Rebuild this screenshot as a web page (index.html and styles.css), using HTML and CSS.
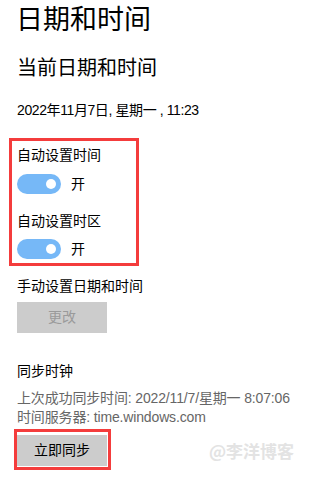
FILE: index.html
```html
<!DOCTYPE html>
<html lang="zh-CN">
<head>
<meta charset="utf-8">
<title>日期和时间</title>
<link rel="stylesheet" href="styles.css">
</head>
<body>
<div class="page">
  <h1 class="title">日期和时间</h1>
  <h2 class="subtitle">当前日期和时间</h2>
  <div class="now">2022年11月7日, 星期一 , 11:23</div>

  <div class="mark auto-box">
    <div class="label">自动设置时间</div>
    <div class="toggle-row">
      <span class="toggle"><span class="knob"></span></span>
      <span class="state">开</span>
    </div>
    <div class="label label-2">自动设置时区</div>
    <div class="toggle-row">
      <span class="toggle"><span class="knob"></span></span>
      <span class="state">开</span>
    </div>
  </div>

  <div class="label manual">手动设置日期和时间</div>
  <div class="btn btn-disabled">更改</div>

  <div class="label sync-title">同步时钟</div>
  <div class="info">
    <div>上次成功同步时间: 2022/11/7/星期一 8:07:06</div>
    <div>时间服务器: time.windows.com</div>
  </div>
  <div class="mark sync-box">
    <div class="btn">立即同步</div>
  </div>
</div>
<div class="watermark">@李洋博客</div>
</body>
</html>
```

FILE: styles.css
```css
html, body {
  margin: 0;
  padding: 0;
  background: #ffffff;
}
body {
  width: 313px;
  height: 478px;
  overflow: hidden;
  position: relative;
  font-family: "Liberation Sans", "Noto Sans CJK SC", sans-serif;
  color: #000;
}
.page {
  padding: 2px 0 0 17px;
  display: flex;
  flex-direction: column;
  align-items: flex-start;
}
.title {
  margin: 0 0 0 -1px;
  font-size: 27px;
  font-weight: 400;
  line-height: 36px;
}
.subtitle {
  margin: 16px 0 0 0;
  font-size: 20px;
  font-weight: 400;
  line-height: 28px;
}
.now {
  margin-top: 18px;
  font-size: 14px;
  line-height: 20px;
  letter-spacing: -0.4px;
}
.mark {
  border: 3px solid #f43c3c;
}
.auto-box {
  margin: 18px 0 0 -8px;
  width: 119px;
  padding: 4px 0 4px 5px;
}
.label {
  font-size: 14px;
  line-height: 20px;
}
.label-2 {
  margin-top: 17px;
}
.toggle-row {
  display: flex;
  align-items: center;
  margin-top: 9px;
  height: 20px;
}
.label-2 + .toggle-row {
  margin-top: 8px;
}
.toggle {
  width: 44px;
  height: 20px;
  border-radius: 10px;
  background: #76b8f7;
  position: relative;
  display: block;
}
.knob {
  position: absolute;
  right: 5px;
  top: 5px;
  width: 10px;
  height: 10px;
  border-radius: 50%;
  background: #ffffff;
}
.state {
  margin-left: 10px;
  font-size: 14px;
  line-height: 20px;
}
.manual {
  margin-top: 10px;
}
.btn {
  width: 90px;
  height: 31px;
  background: #cccccc;
  font-size: 14px;
  line-height: 31px;
  text-align: center;
  color: #000;
}
.btn-disabled {
  margin-top: 6px;
  color: #9a9a9a;
}
.sync-title {
  margin-top: 28px;
}
.info {
  margin-top: 8px;
  font-size: 14px;
  line-height: 19px;
  letter-spacing: -0.15px;
  color: #666666;
}
.sync-box {
  margin: 2px 0 0 -3px;
  padding: 3px 1px 1px 0;
}
.watermark {
  position: absolute;
  left: 209px;
  top: 439px;
  font-size: 17px;
  font-weight: 700;
  line-height: 24px;
  color: #e3e3e3;
  font-family: "Noto Sans CJK SC", sans-serif;
}
```
